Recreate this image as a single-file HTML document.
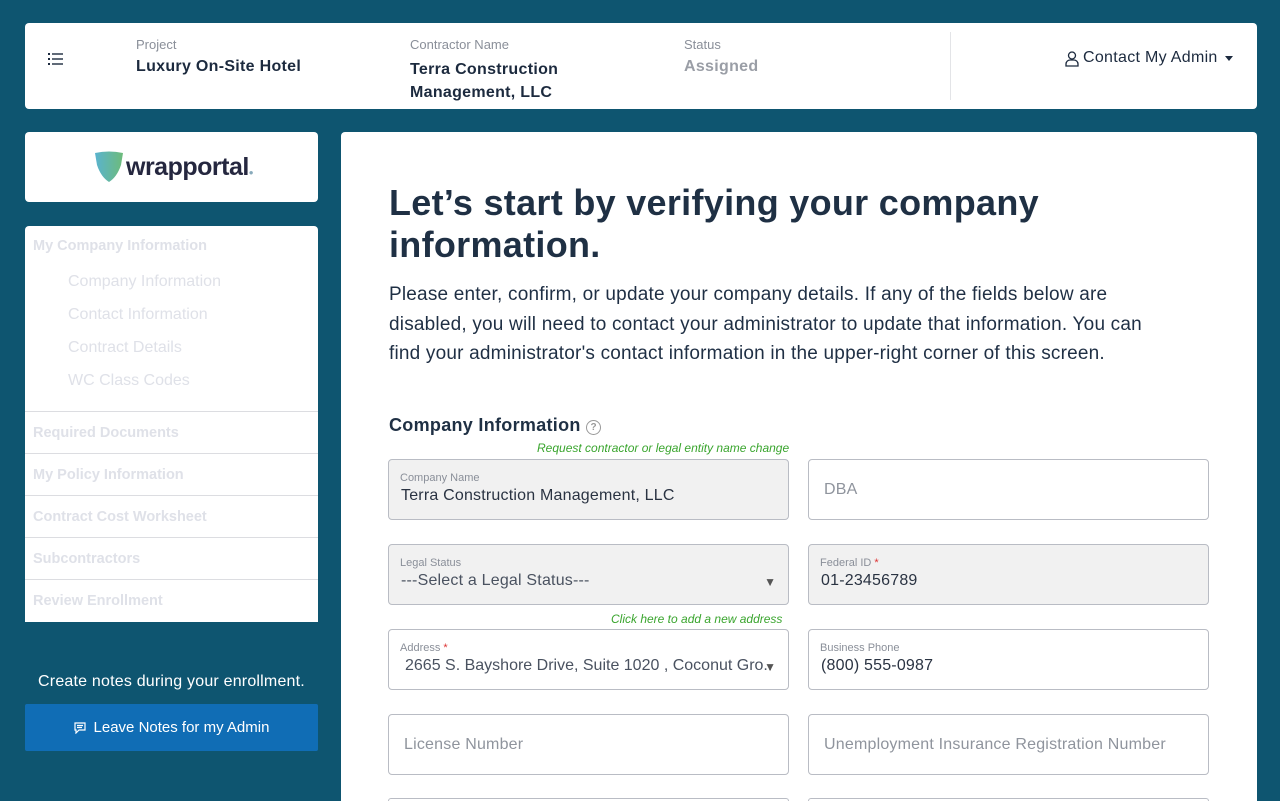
<!DOCTYPE html>
<html><head><meta charset="utf-8"><style>
*{box-sizing:border-box;margin:0;padding:0}
html,body{width:1280px;height:801px;overflow:hidden}
body{background:#0e5570;font-family:"Liberation Sans","DejaVu Sans",sans-serif;position:relative;color:#1f2f44}
.a{position:absolute}
.card{background:#fff;border-radius:4px}
.lbl{font-size:13px;color:#8a8f99}
.val{font-size:16px;font-weight:bold;color:#1c2a3e;letter-spacing:0.3px}
.nav{font-size:14.5px;font-weight:bold;color:#dfe1e8;left:33px}
.sub{font-size:16px;color:#dfe1e8;left:68px}
.sep{left:25px;width:293px;height:1px;background:#dcdde1}
.f{position:absolute;width:401px;height:61px;border:1px solid #b9bcc4;border-radius:4px;background:#fff}
.g{background:#f1f1f1}
.fl{position:absolute;left:11px;top:12px;font-size:11px;color:#8a8f99}
.fv{position:absolute;left:12px;top:27px;font-size:16px;color:#2a3342;letter-spacing:0.2px}
.ph{position:absolute;left:15px;top:21px;font-size:16px;color:#8f949d;letter-spacing:0.2px}
.grn{position:absolute;font-size:12px;font-style:italic;color:#3aa52e}
.arr{position:absolute;right:12px;top:30px;font-size:12px;color:#555}
</style></head><body>
<div class="a card" style="left:25px;top:23px;width:1232px;height:86px">
  <svg class="a" style="left:23px;top:29px" width="16" height="14" viewBox="0 0 16 14"><g fill="#1c2a3e"><rect x="0" y="1" width="2" height="2"/><rect x="0" y="6" width="2" height="2"/><rect x="0" y="11" width="2" height="2"/><rect x="4" y="1.3" width="11" height="1.4"/><rect x="4" y="6.3" width="11" height="1.4"/><rect x="4" y="11.3" width="11" height="1.4"/></g></svg>
  <div class="a lbl" style="left:111px;top:14px">Project</div>
  <div class="a val" style="left:111px;top:35px">Luxury On-Site Hotel</div>
  <div class="a lbl" style="left:385px;top:14px">Contractor Name</div>
  <div class="a val" style="left:385px;top:35px;line-height:23px">Terra Construction<br>Management, LLC</div>
  <div class="a lbl" style="left:659px;top:14px">Status</div>
  <div class="a val" style="left:659px;top:35px;color:#9a9ea6">Assigned</div>
  <div class="a" style="left:925px;top:9px;width:1px;height:68px;background:#e3e4e7"></div>
  <svg class="a" style="left:1040px;top:28px" width="14" height="16" viewBox="0 0 14 16"><g fill="none" stroke="#1c2a3e" stroke-width="1.3"><circle cx="7" cy="4.5" r="3.5"/><path d="M1 15v-2a4 4 0 0 1 4-4h4a4 4 0 0 1 4 4v2z"/></g></svg>
  <div class="a" style="left:1058px;top:26px;font-size:16px;color:#1c2a3e;letter-spacing:0.3px">Contact My Admin</div>
  <div class="a" style="left:1200px;top:33px;width:0;height:0;border-left:4px solid transparent;border-right:4px solid transparent;border-top:5px solid #1c2a3e"></div>
</div>
<div class="a card" style="left:25px;top:132px;width:293px;height:70px">
  <svg class="a" style="left:68px;top:19px" width="32" height="32" viewBox="0 0 32 32"><defs><linearGradient id="gr" x1="0" x2="1"><stop offset="0" stop-color="#5ab3cf"/><stop offset="1" stop-color="#6dbb7a"/></linearGradient></defs><path d="M2 2Q16 -1 30 2L28 14Q24 26 16 31Q8 26 4 14Z" fill="url(#gr)"/></svg>
  <div class="a" style="left:101px;top:21px;font-size:25px;font-weight:bold;color:#25273f;letter-spacing:-0.5px">wrapportal<span style="font-size:8px;color:#8ab">●</span></div>
</div>
<div class="a card" style="left:25px;top:226px;width:293px;height:396px;border-radius:4px 4px 0 0"></div>
<div class="a nav" style="top:238px">My Company Information</div>
<div class="a sub" style="top:273px">Company Information</div>
<div class="a sub" style="top:306px">Contact Information</div>
<div class="a sub" style="top:339px">Contract Details</div>
<div class="a sub" style="top:372px">WC Class Codes</div>
<div class="a sep" style="top:411px"></div>
<div class="a nav" style="top:425px">Required Documents</div>
<div class="a sep" style="top:453px"></div>
<div class="a nav" style="top:467px">My Policy Information</div>
<div class="a sep" style="top:495px"></div>
<div class="a nav" style="top:509px">Contract Cost Worksheet</div>
<div class="a sep" style="top:537px"></div>
<div class="a nav" style="top:551px">Subcontractors</div>
<div class="a sep" style="top:579px"></div>
<div class="a nav" style="top:593px">Review Enrollment</div>
<div class="a" style="left:25px;top:673px;width:293px;text-align:center;color:#fff;font-size:16px;letter-spacing:0.2px">Create notes during your enrollment.</div>
<div class="a" style="left:25px;top:704px;width:293px;height:47px;background:#106db5;border-radius:2px;color:#fff;font-size:15px;text-align:center;line-height:47px">
  <svg style="vertical-align:-2px;margin-right:8px" width="12" height="12" viewBox="0 0 12 12"><g fill="none" stroke="#fff" stroke-width="1.2"><path d="M1 1h10v7H5l-3 3V8H1z"/><path d="M3 3.5h6M3 5.5h5"/></g></svg>Leave Notes for my Admin</div>
<div class="a" style="left:341px;top:132px;width:916px;height:669px;background:#fff;border-radius:4px 4px 0 0">
  <div class="a" style="left:48px;top:50px;font-size:36px;font-weight:bold;color:#1f3044;line-height:42px;letter-spacing:0.3px">Let’s start by verifying your company<br>information.</div>
  <div class="a" style="left:48px;top:148px;width:860px;font-size:19px;line-height:29.5px;color:#1f2f44;letter-spacing:0.2px;white-space:nowrap">Please enter, confirm, or update your company details. If any of the fields below are<br>disabled, you will need to contact your administrator to update that information. You can<br>find your administrator's contact information in the upper-right corner of this screen.</div>
  <div class="a" style="left:48px;top:283px;font-size:18px;font-weight:bold;color:#1f3044;letter-spacing:0.3px">Company Information <span style="display:inline-block;width:15px;height:15px;border:1.3px solid #999;border-radius:50%;font-size:10px;color:#999;text-align:center;line-height:13px;vertical-align:1px;letter-spacing:0">?</span></div>
</div>
<div class="grn" style="left:537px;top:441px">Request contractor or legal entity name change</div>
<div class="f g" style="left:388px;top:459px"><div class="fl">Company Name</div><div class="fv">Terra Construction Management, LLC</div></div>
<div class="f" style="left:808px;top:459px"><div class="ph">DBA</div></div>
<div class="f g" style="left:388px;top:544px"><div class="fl">Legal Status</div><div class="fv" style="color:#4a5260">---Select a Legal Status---</div><div class="arr">▼</div></div>
<div class="f g" style="left:808px;top:544px"><div class="fl">Federal ID <span style="color:#d33">*</span></div><div class="fv">01-23456789</div></div>
<div class="grn" style="left:611px;top:612px">Click here to add a new address</div>
<div class="f" style="left:388px;top:629px"><div class="fl">Address <span style="color:#d33">*</span></div><div class="fv" style="left:16px;color:#4a5260;letter-spacing:0">2665 S. Bayshore Drive, Suite 1020 , Coconut Gro..</div><div class="arr">▼</div></div>
<div class="f" style="left:808px;top:629px"><div class="fl">Business Phone</div><div class="fv">(800) 555-0987</div></div>
<div class="f" style="left:388px;top:714px"><div class="ph">License Number</div></div>
<div class="f" style="left:808px;top:714px"><div class="ph">Unemployment Insurance Registration Number</div></div>
<div class="f" style="left:388px;top:798px;height:3px;border-bottom:0;border-radius:4px 4px 0 0"></div>
<div class="f" style="left:808px;top:798px;height:3px;border-bottom:0;border-radius:4px 4px 0 0"></div>
</body></html>
